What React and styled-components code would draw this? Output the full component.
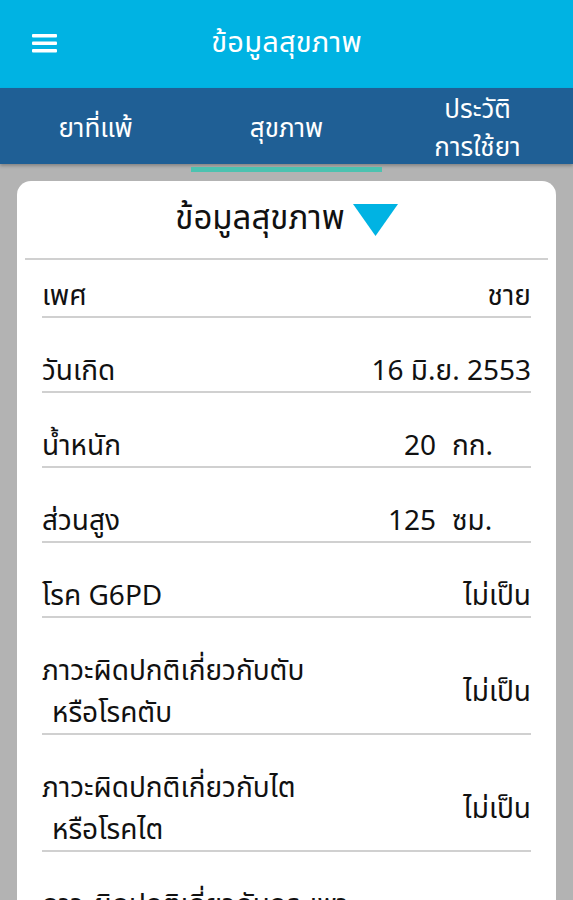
import React from "react";
import styled, { createGlobalStyle } from "styled-components";

const Global = createGlobalStyle`
  html, body { margin: 0; padding: 0; }
  body {
    background: #b3b3b3;
    font-family: "Noto Sans Thai", "Noto Sans", "DejaVu Sans", sans-serif;
    -webkit-font-smoothing: antialiased;
  }
`;

const Page = styled.div`
  width: 573px;
  height: 900px;
  overflow: hidden;
  background: #b3b3b3;
`;

const Header = styled.header`
  height: 88px;
  background: #00b3e3;
  display: grid;
  grid-template-columns: 1fr auto 1fr;
  align-items: center;
`;

const MenuButton = styled.div`
  padding-left: 32px;
  display: flex;
`;

const Title = styled.h1`
  margin: 0;
  color: #fff;
  font-size: 29px;
  font-weight: 400;
  line-height: 1;
  padding-bottom: 2px;
  letter-spacing: 0.2px;
`;

const TabBar = styled.nav`
  height: 76px;
  background: #1f5f95;
  display: grid;
  grid-template-columns: repeat(3, 1fr);
  box-shadow: 0 2px 3px rgba(0, 0, 0, 0.25);
  position: relative;
`;

const Tab = styled.div`
  display: flex;
  flex-direction: column;
  align-items: center;
  justify-content: center;
  color: #fff;
  font-size: 26px;
  line-height: 38px;
  text-align: center;
  border-bottom: 5px solid ${(p) => (p.$active ? "#4cc2b0" : "transparent")};
  padding-top: 3px;
`;

const Content = styled.main`
  padding: 17px 17px 0;
`;

const Card = styled.section`
  background: #fff;
  border-radius: 14px;
  padding: 0 8px;
`;

const CardHeader = styled.div`
  height: 77px;
  display: flex;
  align-items: center;
  justify-content: center;
  gap: 8px;
  border-bottom: 2px solid #d0d0d0;
`;

const CardTitle = styled.h2`
  margin: 0;
  font-size: 33px;
  font-weight: 400;
  color: #111;
  line-height: 1;
`;

const Rows = styled.div`
  padding: 0 17px;
`;

const Row = styled.div`
  display: flex;
  align-items: center;
  justify-content: space-between;
  padding-top: ${(p) => (p.$first ? "14px" : "31px")};
  border-bottom: 2px solid #d0d0d0;
  color: #111;
  font-size: 28px;
  line-height: 42px;
`;

const Label = styled.div`
  display: flex;
  flex-direction: column;
  padding-top: 2px;
  margin-bottom: -2px;
`;

const LabelLine = styled.span`
  padding-left: ${(p) => (p.$indent ? "10px" : "0")};
`;

const Value = styled.div`
  display: flex;
  align-items: center;
  white-space: nowrap;
  padding-top: 2px;
  margin-bottom: -2px;
`;

const Unit = styled.span`
  width: 79px;
  margin-left: 16px;
`;

const Hamburger = () => (
  <svg width="25" height="20" viewBox="0 0 25 20">
    <rect x="0" y="0" width="25" height="3.5" rx="1" fill="#fff" />
    <rect x="0" y="7.5" width="25" height="3.5" rx="1" fill="#fff" />
    <rect x="0" y="15" width="25" height="3.5" rx="1" fill="#fff" />
  </svg>
);

const Triangle = () => (
  <svg width="45" height="32" viewBox="0 0 45 32">
    <polygon points="0,0 45,0 22.5,32" fill="#00b3e3" />
  </svg>
);

const rows = [
  { label: ["เพศ"], value: "ชาย" },
  { label: ["วันเกิด"], value: "16 มิ.ย. 2553" },
  { label: ["น้ำหนัก"], value: "20", unit: "กก." },
  { label: ["ส่วนสูง"], value: "125", unit: "ซม." },
  { label: ["โรค G6PD"], value: "ไม่เป็น" },
  { label: ["ภาวะผิดปกติเกี่ยวกับตับ", "หรือโรคตับ"], value: "ไม่เป็น" },
  { label: ["ภาวะผิดปกติเกี่ยวกับไต", "หรือโรคไต"], value: "ไม่เป็น" },
  { label: ["ภาวะผิดปกติเกี่ยวกับกระเพาะ", "อาหาร"], value: "ไม่เป็น" },
];

export default function App() {
  return (
    <Page>
      <Global />
      <Header>
        <MenuButton>
          <Hamburger />
        </MenuButton>
        <Title>ข้อมูลสุขภาพ</Title>
        <div />
      </Header>
      <TabBar>
        <Tab>ยาที่แพ้</Tab>
        <Tab $active>สุขภาพ</Tab>
        <Tab>
          <span>ประวัติ</span>
          <span>การใช้ยา</span>
        </Tab>
      </TabBar>
      <Content>
        <Card>
          <CardHeader>
            <CardTitle>ข้อมูลสุขภาพ</CardTitle>
            <Triangle />
          </CardHeader>
          <Rows>
            {rows.map((r, i) => (
              <Row key={i} $first={i === 0}>
                <Label>
                  {r.label.map((l, j) => (
                    <LabelLine key={j} $indent={j > 0}>
                      {l}
                    </LabelLine>
                  ))}
                </Label>
                <Value>
                  <span>{r.value}</span>
                  {r.unit && <Unit>{r.unit}</Unit>}
                </Value>
              </Row>
            ))}
          </Rows>
        </Card>
      </Content>
    </Page>
  );
}
